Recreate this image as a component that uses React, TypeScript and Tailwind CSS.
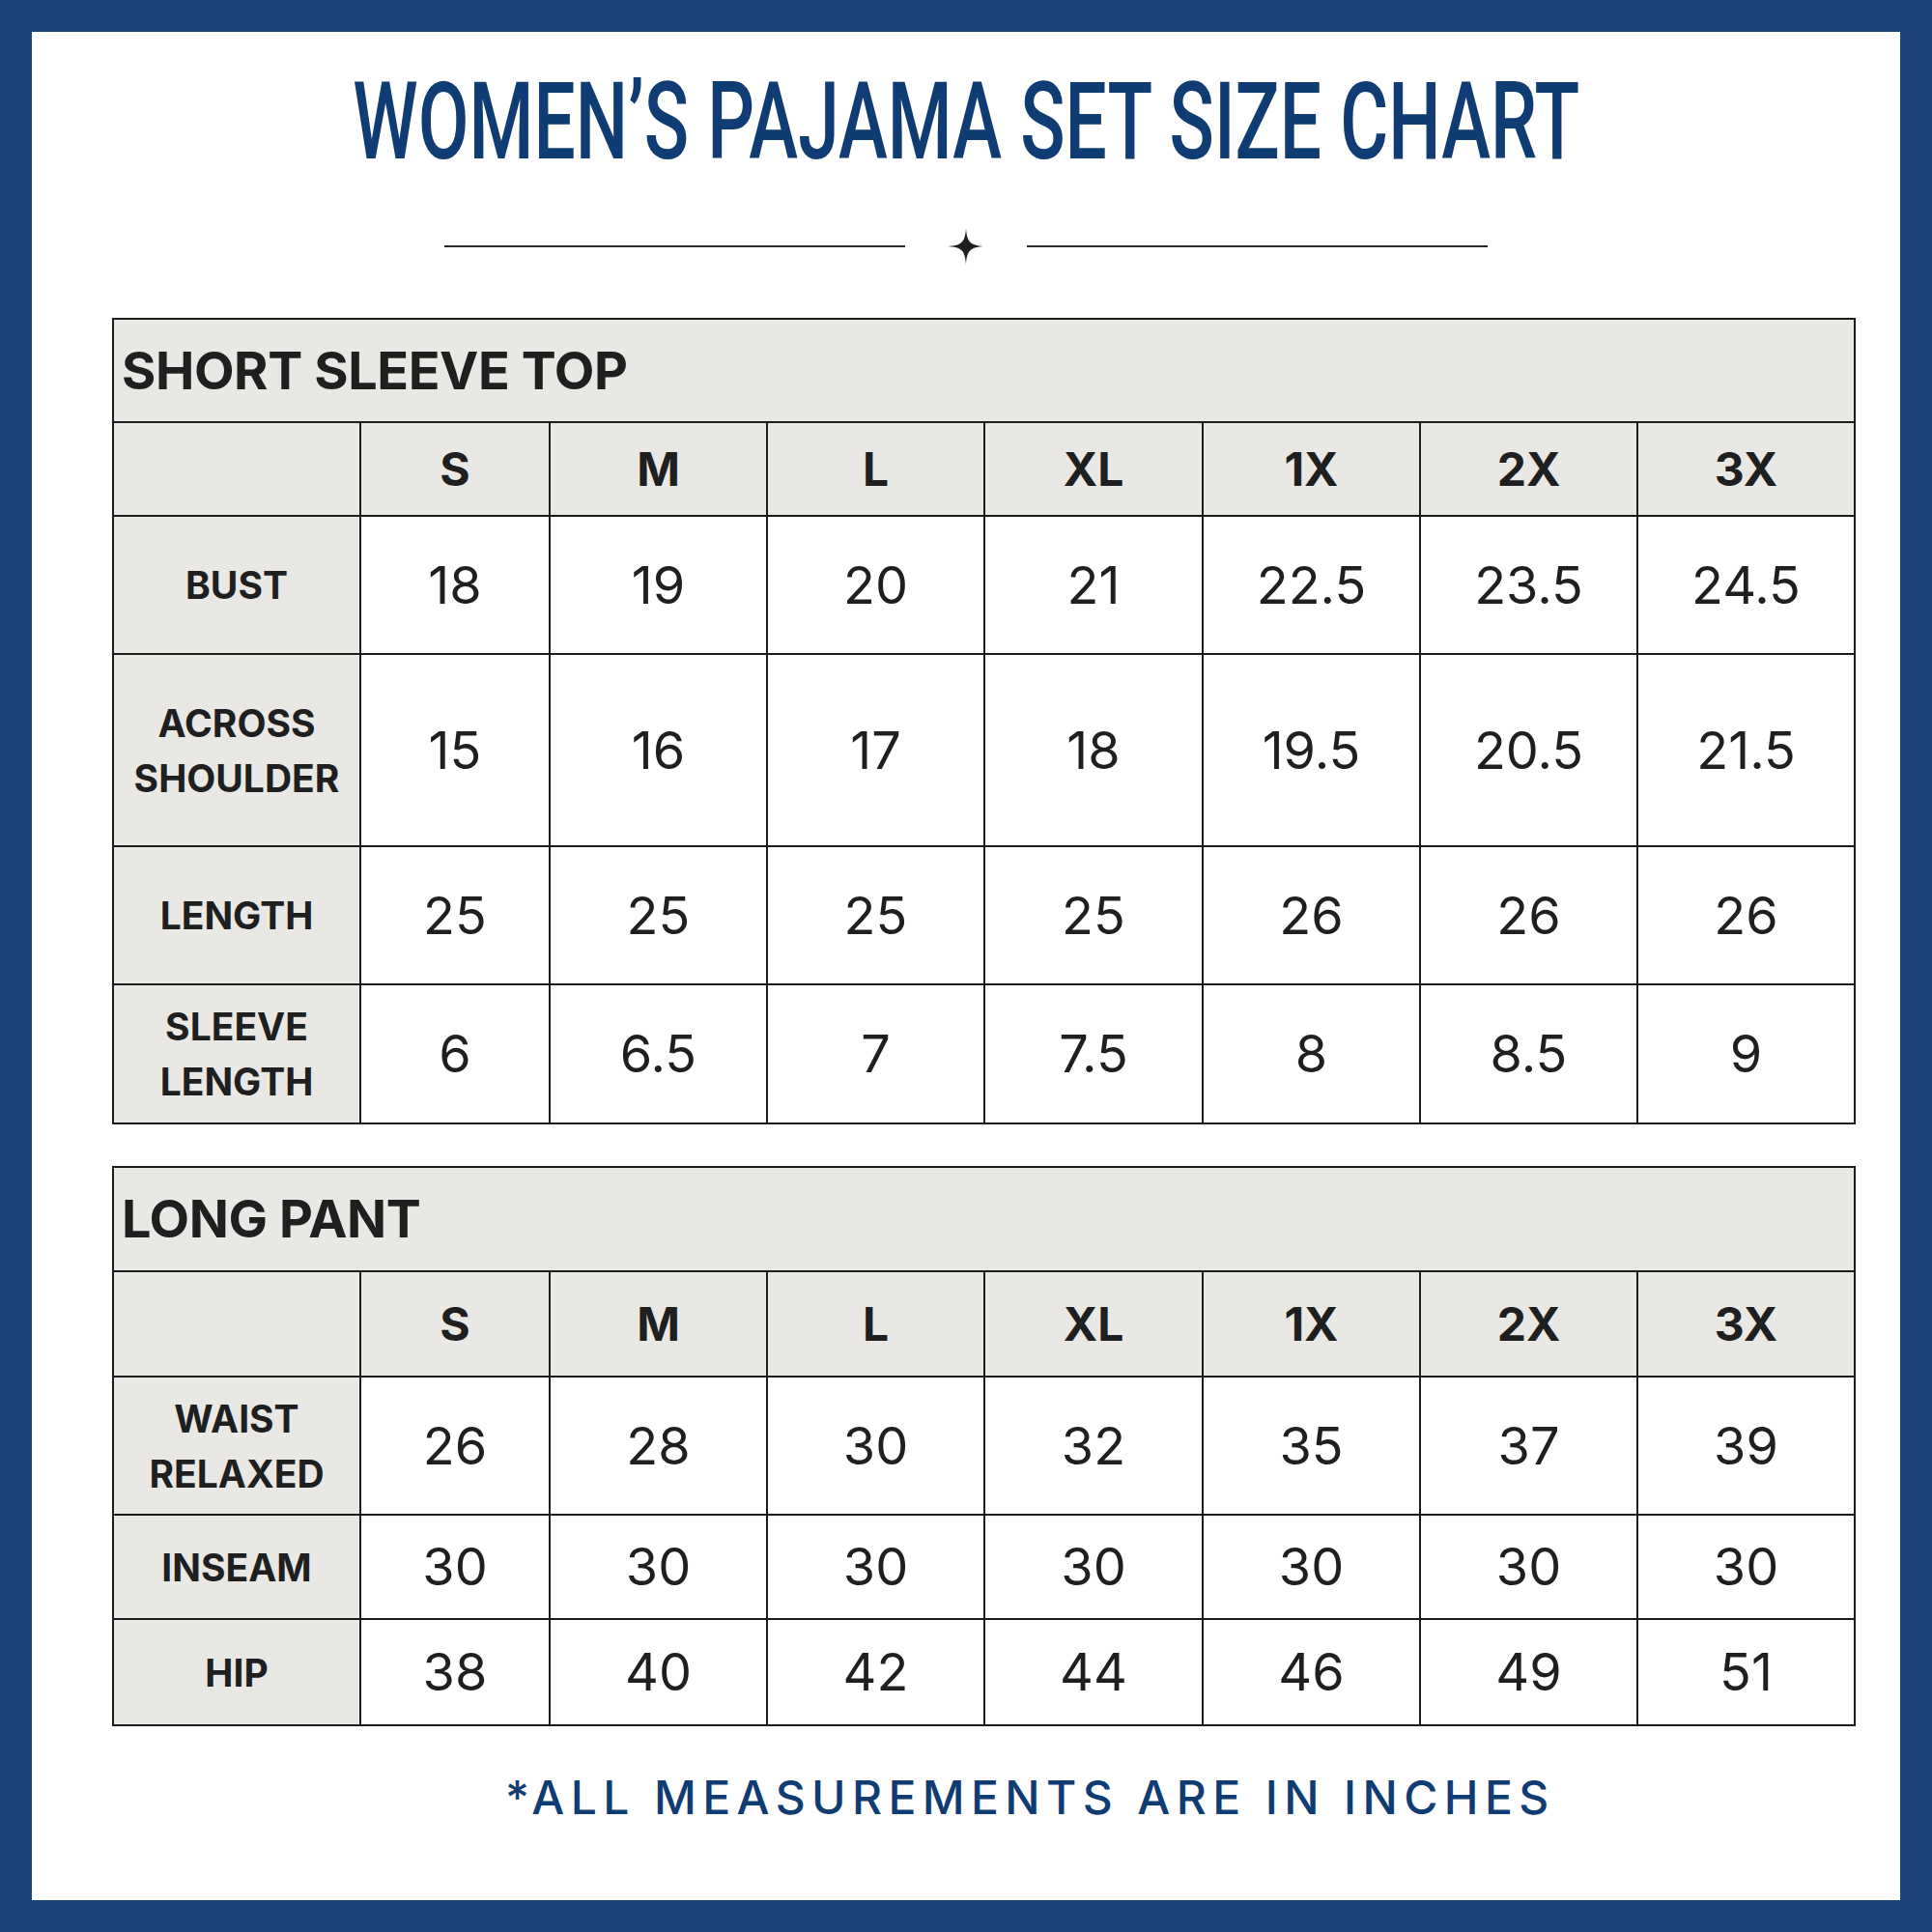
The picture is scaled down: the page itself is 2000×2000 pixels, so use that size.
import React from "react"

const sizes = ["S", "M", "L", "XL", "1X", "2X", "3X"]

interface Row {
  label: string[]
  values: string[]
  h: string
}

const topRows: Row[] = [
  { label: ["BUST"], values: ["18", "19", "20", "21", "22.5", "23.5", "24.5"], h: "h-[143px]" },
  { label: ["ACROSS", "SHOULDER"], values: ["15", "16", "17", "18", "19.5", "20.5", "21.5"], h: "h-[199px]" },
  { label: ["LENGTH"], values: ["25", "25", "25", "25", "26", "26", "26"], h: "h-[143px]" },
  { label: ["SLEEVE", "LENGTH"], values: ["6", "6.5", "7", "7.5", "8", "8.5", "9"], h: "h-[144px]" },
]

const pantRows: Row[] = [
  { label: ["WAIST", "RELAXED"], values: ["26", "28", "30", "32", "35", "37", "39"], h: "h-[143px]" },
  { label: ["INSEAM"], values: ["30", "30", "30", "30", "30", "30", "30"], h: "h-[108px]" },
  { label: ["HIP"], values: ["38", "40", "42", "44", "46", "49", "51"], h: "h-[110px]" },
]

const gridCols = "grid grid-cols-[256px_196px_225px_225px_226px_225px_225px_225px]"

function SizeTable({
  title,
  titleH,
  headerH,
  rows,
}: {
  title: string
  titleH: string
  headerH: string
  rows: Row[]
}) {
  return (
    <div className="ml-[83px] w-[1805px] border-t-2 border-l-2 border-[#1c1c1c] font-['Inter',sans-serif] text-[#1f1f1f]">
      {/* section title */}
      <div className={`${titleH} flex items-center bg-[#e9e8e5] border-b-2 border-r-2 border-[#1c1c1c] pl-[8px]`}>
        <span className="text-[54px] font-bold leading-none tracking-[-0.4px]">{title}</span>
      </div>

      {/* size header */}
      <div className={`${gridCols} ${headerH} bg-[#e9e8e5] border-b-2 border-[#1c1c1c]`}>
        <div className="border-r-2 border-[#1c1c1c]" />
        {sizes.map((s) => (
          <div key={s} className="flex items-center justify-center border-r-2 border-[#1c1c1c] text-[48px] font-bold leading-none">
            {s}
          </div>
        ))}
      </div>

      {rows.map((row) => (
        <div key={row.label.join(" ")} className={`${gridCols} ${row.h} border-b-2 border-[#1c1c1c]`}>
          <div className="flex flex-col items-center justify-center bg-[#e9e8e5] border-r-2 border-[#1c1c1c] text-[39px] font-bold leading-[57px] text-center">
            {row.label.map((l) => (
              <span key={l}>{l}</span>
            ))}
          </div>
          {row.values.map((v, i) => (
            <div key={i} className="flex items-center justify-center bg-white border-r-2 border-[#1c1c1c] text-[54px] font-normal leading-none">
              {v}
            </div>
          ))}
        </div>
      ))}
    </div>
  )
}

export default function App() {
  return (
    <div className="w-[2000px] h-[2000px] bg-[#1d4278] p-[33px]">
      <div className="w-full h-full bg-white flex flex-col">
        {/* heading */}
        <div className="mt-[37px] h-[112px] flex items-center justify-center">
          <h1 className="inline-block whitespace-nowrap scale-x-[0.684] font-['Roboto',sans-serif] font-medium text-[112px] leading-none text-[#0f3c73]">
            WOMEN’S PAJAMA SET SIZE CHART
          </h1>
        </div>

        {/* divider with star */}
        <div className="mt-[54px] h-[38px] flex items-center justify-center">
          <div className="w-[477px] h-[2px] bg-[#2a2a2a]" />
          <svg className="mx-[44px]" width="38" height="38" viewBox="0 0 38 38">
            <path
              d="M19 0 C19.8 14.5 23.5 18.2 38 19 C23.5 19.8 19.8 23.5 19 38 C18.2 23.5 14.5 19.8 0 19 C14.5 18.2 18.2 14.5 19 0 Z"
              fill="#1f1f1f"
            />
          </svg>
          <div className="w-[477px] h-[2px] bg-[#2a2a2a]" />
        </div>

        <div className="mt-[55px]">
          <SizeTable title="SHORT SLEEVE TOP" titleH="h-[107px]" headerH="h-[97px]" rows={topRows} />
        </div>

        <div className="mt-[43px]">
          <SizeTable title="LONG PANT" titleH="h-[108px]" headerH="h-[109px]" rows={pantRows} />
        </div>

        {/* footnote */}
        <div className="mt-[44px] h-[60px] flex items-center pl-[490px]">
          <span className="font-['Inter',sans-serif] font-medium text-[48px] leading-none tracking-[0.133em] text-[#0f3c73] whitespace-nowrap">
            *ALL MEASUREMENTS ARE IN INCHES
          </span>
        </div>
      </div>
    </div>
  )
}
